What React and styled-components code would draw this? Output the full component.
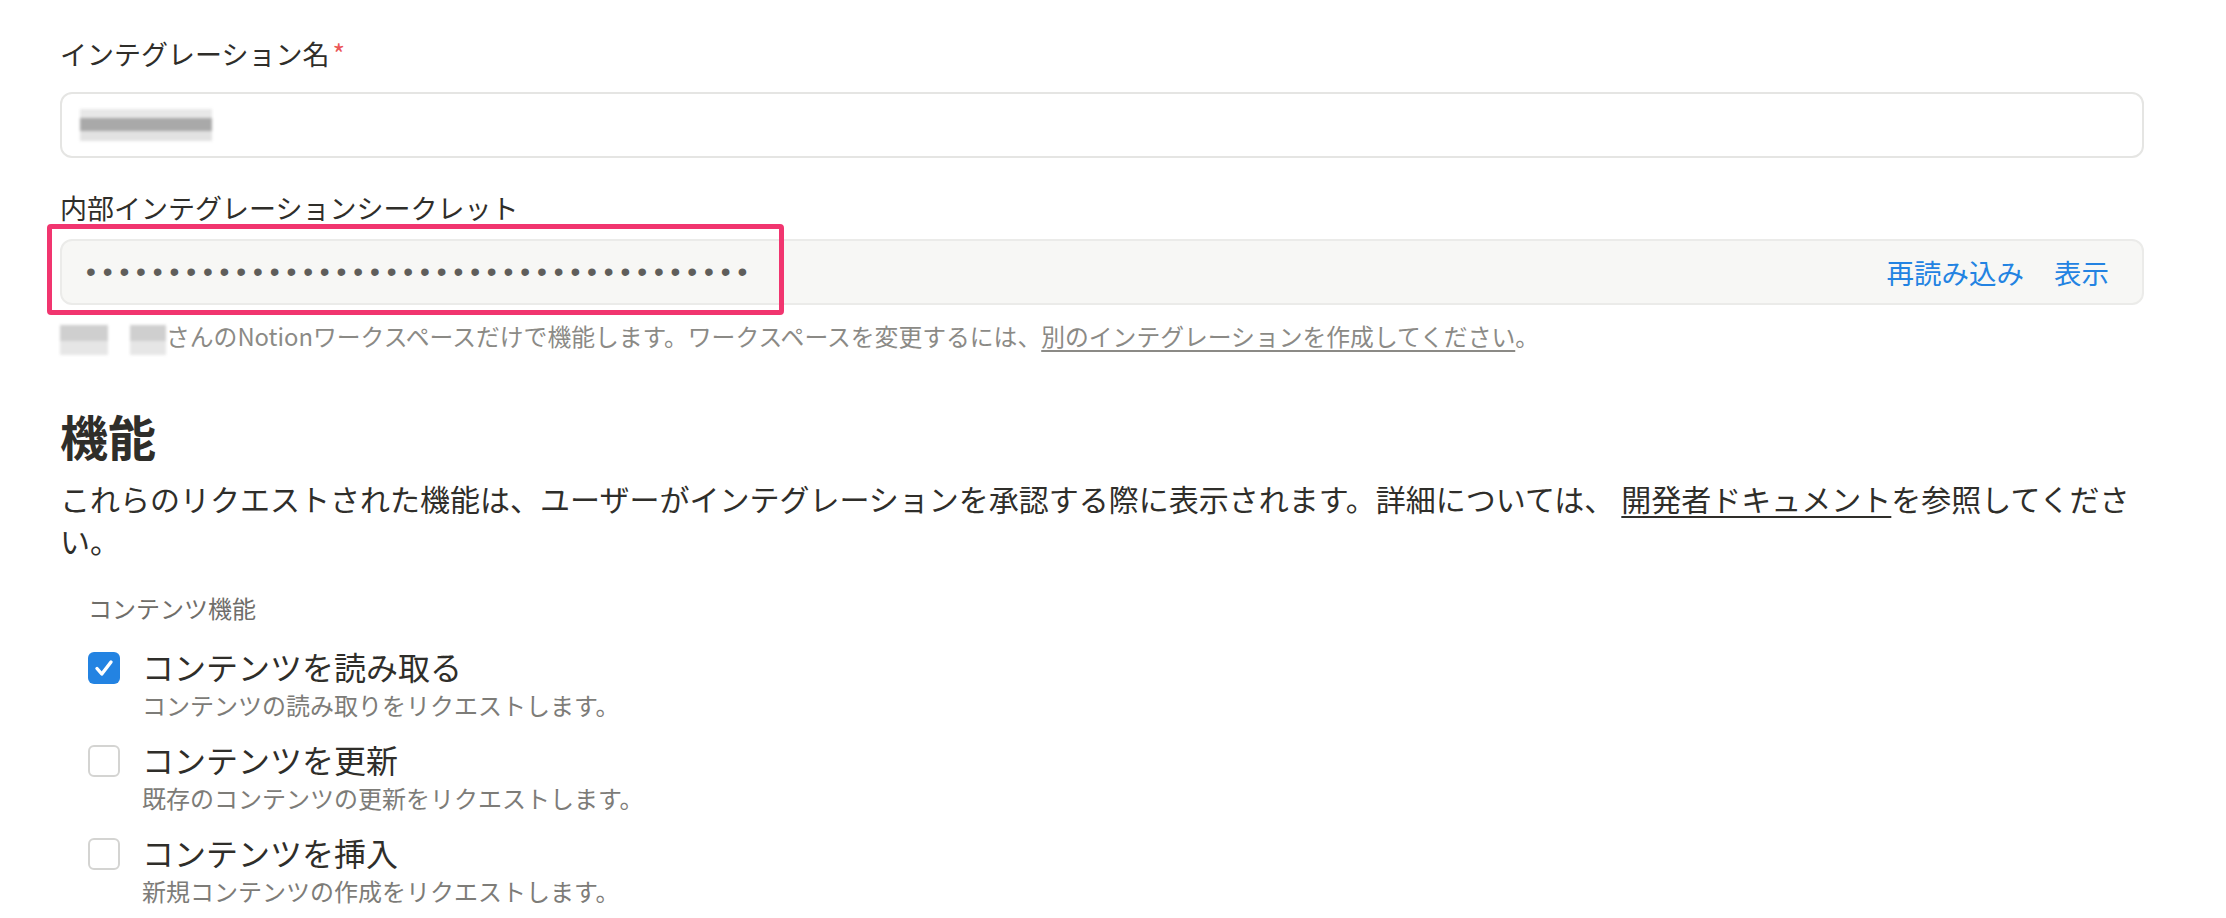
import styled, { createGlobalStyle } from "styled-components";

const GlobalStyle = createGlobalStyle`
  html, body {
    margin: 0;
    padding: 0;
    background: #ffffff;
  }
  body {
    font-family: "Noto Sans CJK JP", "Noto Sans", sans-serif;
    color: #37352f;
  }
`;

const items = [
  { title: "コンテンツを読み取る", desc: "コンテンツの読み取りをリクエストします。", checked: true },
  { title: "コンテンツを更新", desc: "既存のコンテンツの更新をリクエストします。", checked: false },
  { title: "コンテンツを挿入", desc: "新規コンテンツの作成をリクエストします。", checked: false },
];

function CheckIcon() {
  return (
    <svg width="32" height="32" viewBox="0 0 32 32" fill="none">
      <polyline
        points="9,16.5 13.8,22 23,10"
        stroke="#ffffff"
        strokeWidth="3.4"
        strokeLinecap="round"
        strokeLinejoin="round"
      />
    </svg>
  );
}

export default function App() {
  return (
    <>
      <GlobalStyle />
      <Page>
        <Field>
          <Label $gap={20}>
            インテグレーション名<Required>*</Required>
          </Label>
          <TextInput>
            <Redacted $w={132} $h={32} $variant="input" />
          </TextInput>
        </Field>

        <Field $top={32}>
          <Label $gap={13}>内部インテグレーションシークレット</Label>
          <SecretWrap>
            <SecretInput>
              <Dots>{"•".repeat(40)}</Dots>
              <Actions>
                <LinkButton>再読み込み</LinkButton>
                <LinkButton>表示</LinkButton>
              </Actions>
            </SecretInput>
            <Highlight />
          </SecretWrap>
          <Help>
            <Redacted $w={48} $h={30} $variant="help" />
            <Gap />
            <Redacted $w={36} $h={30} $variant="help" />
            さんのNotionワークスペースだけで機能します。ワークスペースを変更するには、
            <HelpLink>別のインテグレーションを作成してください</HelpLink>。
          </Help>
        </Field>

        <Heading>機能</Heading>
        <Intro>
          これらのリクエストされた機能は、ユーザーがインテグレーションを承認する際に表示されます。詳細については、
          <DocLink>開発者ドキュメント</DocLink>
          <span>を参照してくださ</span>
          <span>い。</span>
        </Intro>

        <Group>
          <GroupLabel>コンテンツ機能</GroupLabel>
          <ItemList>
            {items.map((item) => (
              <Item key={item.title}>
                <Box $checked={item.checked}>{item.checked && <CheckIcon />}</Box>
                <ItemText>
                  <ItemTitle>{item.title}</ItemTitle>
                  <ItemDesc>{item.desc}</ItemDesc>
                </ItemText>
              </Item>
            ))}
          </ItemList>
        </Group>
      </Page>
    </>
  );
}

const Page = styled.div`
  display: flex;
  flex-direction: column;
  padding: 36px 82px 0 60px;
`;

const Field = styled.div`
  display: flex;
  flex-direction: column;
  margin-top: ${(p) => p.$top || 0}px;
`;

const Label = styled.div`
  font-size: 27px;
  line-height: 36px;
  color: #2f2e2a;
  margin-bottom: ${(p) => p.$gap}px;
`;

const Required = styled.span`
  color: #eb5757;
  margin-left: 3px;
`;

const TextInput = styled.div`
  display: flex;
  align-items: center;
  height: 66px;
  box-sizing: border-box;
  padding: 0 18px;
  border: 2px solid #e5e5e3;
  border-radius: 12px;
  background: #ffffff;
`;

const Redacted = styled.span`
  display: inline-block;
  vertical-align: middle;
  width: ${(p) => p.$w}px;
  height: ${(p) => p.$h}px;
  filter: blur(1.6px);
  background: ${(p) =>
    p.$variant === "input"
      ? "linear-gradient(180deg, #e8e8e8 0 28%, #a9a9a9 28% 68%, #e2e2e2 68%)"
      : "linear-gradient(180deg, #cfcfcf 0 55%, #e6e6e6 55%)"};
`;

const Gap = styled.span`
  display: inline-block;
  width: 22px;
`;

const SecretWrap = styled.div`
  position: relative;
`;

const SecretInput = styled.div`
  display: flex;
  align-items: center;
  justify-content: space-between;
  height: 66px;
  box-sizing: border-box;
  padding: 0 33px 0 24px;
  border: 2px solid #ebebe9;
  border-radius: 12px;
  background: #f7f7f5;
`;

const Dots = styled.span`
  font-family: "Liberation Sans", sans-serif;
  font-size: 28px;
  letter-spacing: 6.9px;
  color: #5f5e5b;
  line-height: 1;
`;

const Actions = styled.div`
  display: flex;
  gap: 30px;
`;

const LinkButton = styled.span`
  font-size: 27.5px;
  line-height: 36px;
  color: #2383e2;
  cursor: pointer;
`;

const Highlight = styled.div`
  position: absolute;
  left: -13px;
  top: -15px;
  width: 737px;
  height: 91px;
  box-sizing: border-box;
  border: 5px solid #f1356f;
  border-radius: 4px;
  pointer-events: none;
`;

const Help = styled.div`
  margin-top: 14px;
  font-size: 23.8px;
  line-height: 34px;
  color: #8b8a86;
  white-space: nowrap;
`;

const HelpLink = styled.span`
  text-decoration: underline;
  text-underline-offset: 4px;
`;

const Heading = styled.h2`
  margin: 50px 0 0;
  font-size: 48px;
  line-height: 60px;
  font-weight: 700;
  color: #2f2e2a;
`;

const Intro = styled.p`
  margin: 12px 0 0;
  font-size: 30px;
  line-height: 42px;
  color: #2f2e2a;
`;

const DocLink = styled.span`
  margin-left: 7px;
  text-decoration: underline;
  text-underline-offset: 5px;
  text-decoration-thickness: 2px;
`;

const Group = styled.section`
  display: flex;
  flex-direction: column;
  margin-top: 30px;
  padding-left: 28px;
`;

const GroupLabel = styled.div`
  font-size: 24px;
  line-height: 34px;
  color: #6f6e6a;
`;

const ItemList = styled.div`
  display: flex;
  flex-direction: column;
  gap: 17px;
  margin-top: 21px;
`;

const Item = styled.div`
  display: flex;
  align-items: flex-start;
  gap: 22px;
`;

const Box = styled.span`
  flex: none;
  display: flex;
  width: 32px;
  height: 32px;
  margin-top: 6px;
  box-sizing: border-box;
  border-radius: 6px;
  border: ${(p) => (p.$checked ? "none" : "2px solid #d4d4d2")};
  background: ${(p) => (p.$checked ? "#2383e2" : "#ffffff")};
`;

const ItemText = styled.div`
  display: flex;
  flex-direction: column;
`;

const ItemTitle = styled.div`
  font-size: 32px;
  line-height: 40px;
  color: #2f2e2a;
`;

const ItemDesc = styled.div`
  margin-top: 2px;
  font-size: 24px;
  line-height: 34px;
  color: #7d7c78;
`;
